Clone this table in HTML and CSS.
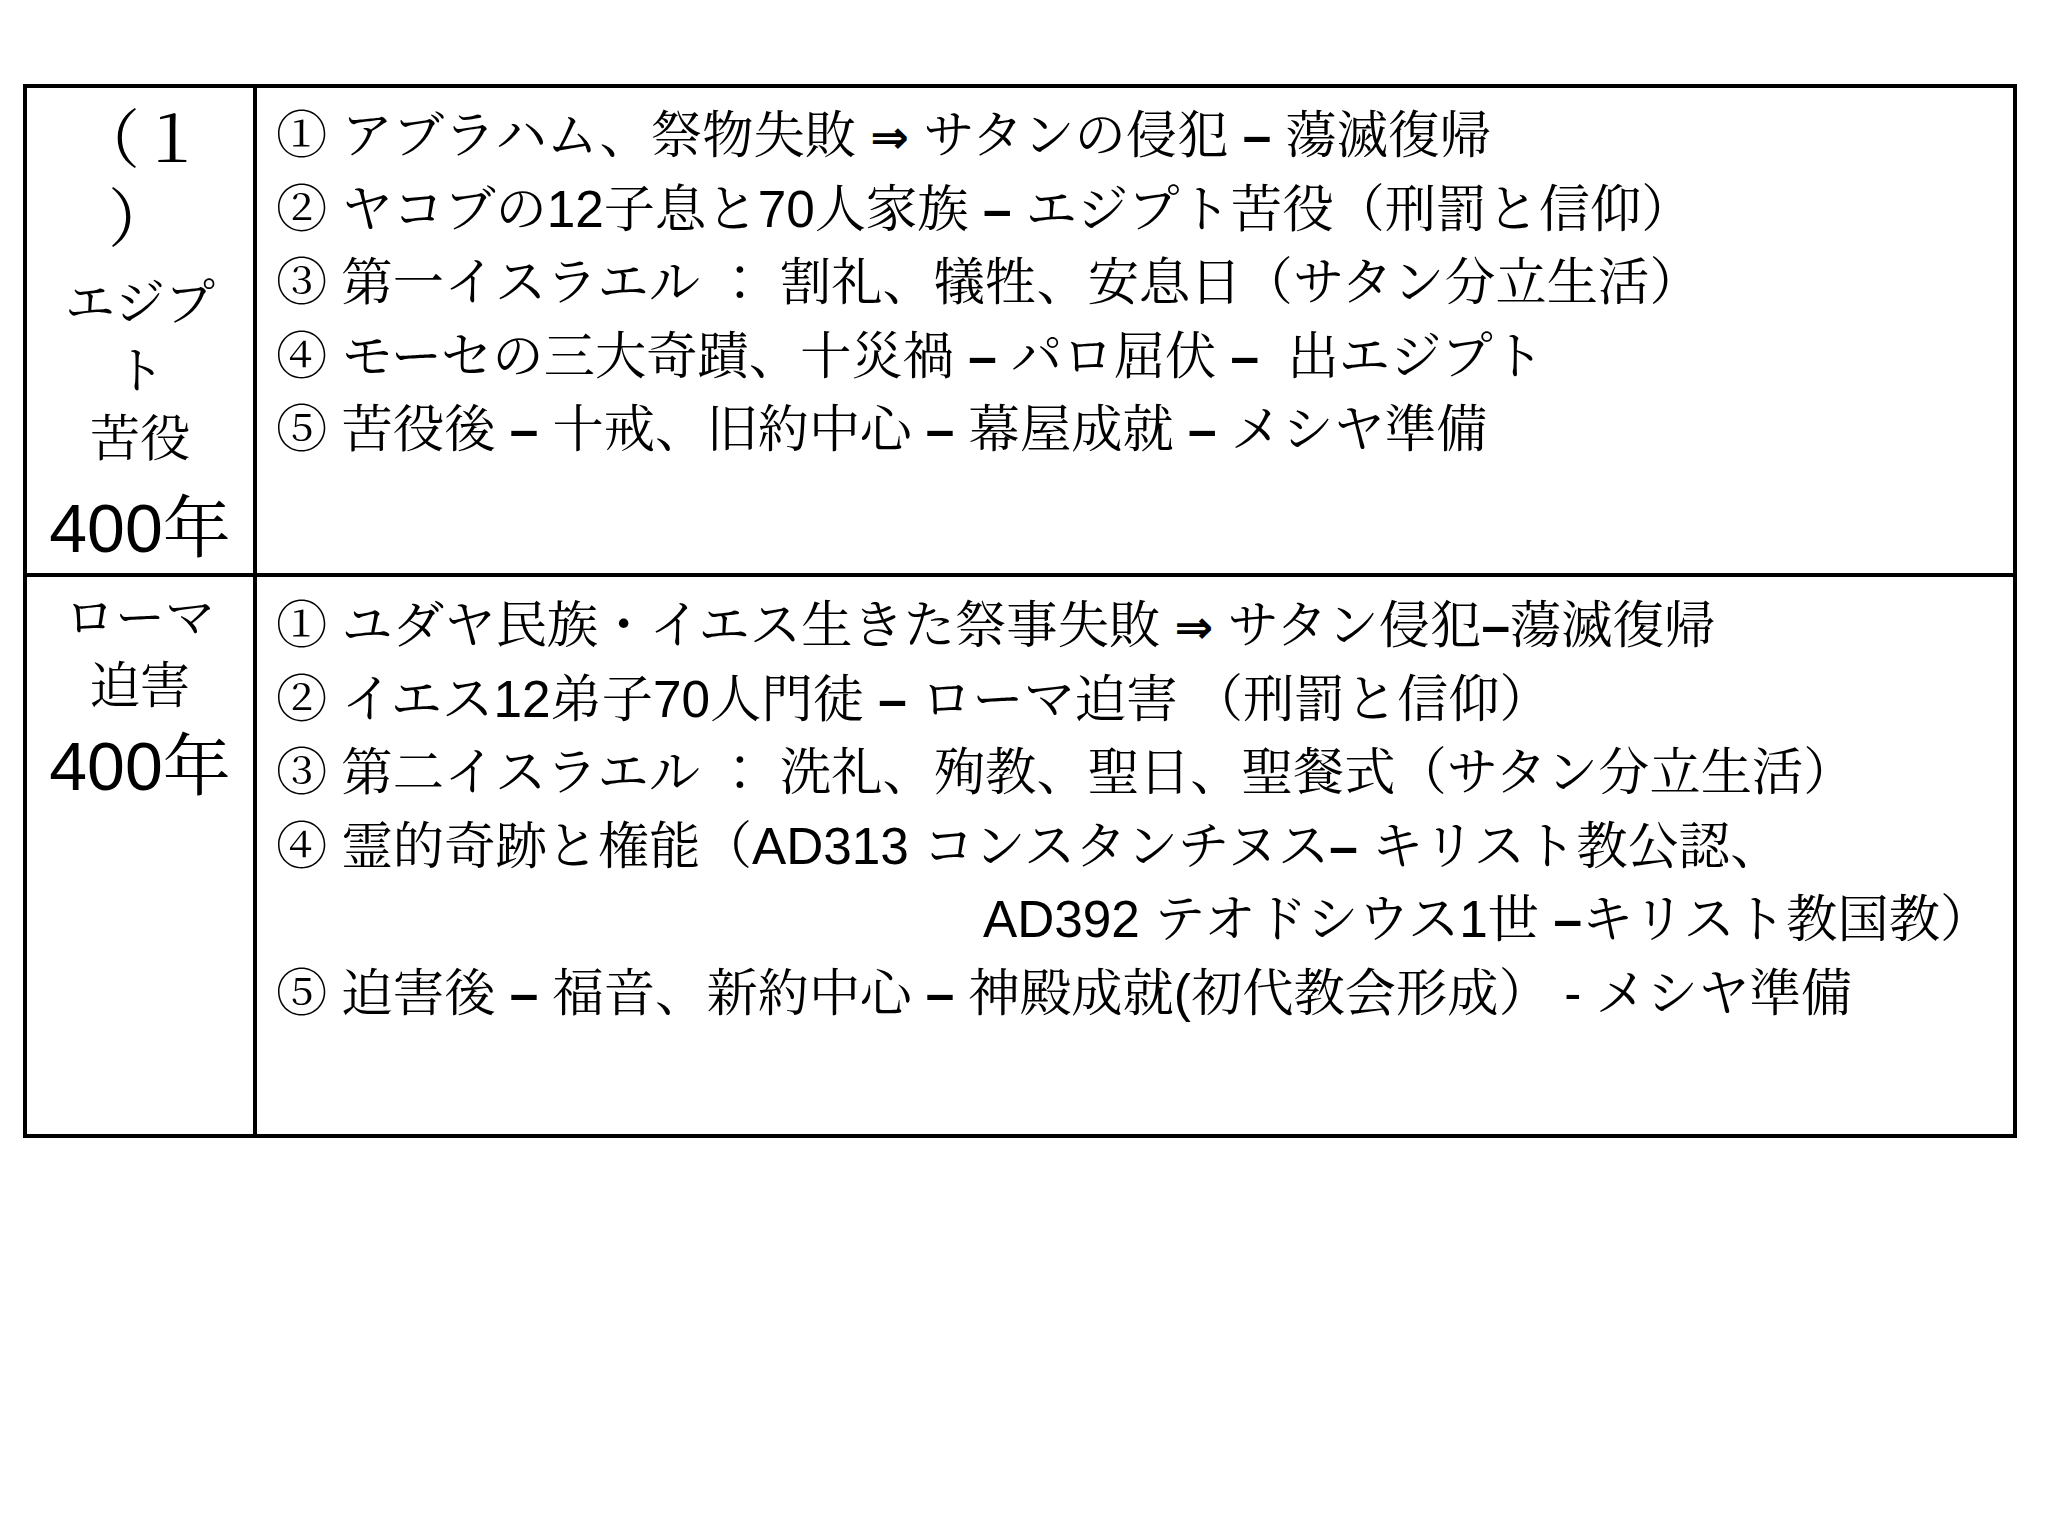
FILE: index.html
```html
<!DOCTYPE html>
<html lang="ja">
<head>
<meta charset="utf-8">
<title>エジプト苦役とローマ迫害</title>
<link rel="stylesheet" href="styles.css">
</head>
<body>
<div class="sheet">
  <div class="cell side r1">
    <div class="paren">（１<br>）</div>
    <div class="lbl lbl1">エジプ<br>ト<br>苦役</div>
    <div class="yrs yrs1">400年</div>
  </div>
  <div class="cell main r1">
    <div class="ln">① アブラハム、祭物失敗 <span class="arw">⇒</span> サタンの侵犯 <span class="d">–</span> 蕩滅復帰</div>
    <div class="ln">② ヤコブの12子息と70人家族 <span class="d">–</span> エジプト苦役（刑罰と信仰）</div>
    <div class="ln">③ 第一イスラエル ： 割礼、犠牲、安息日（サタン分立生活）</div>
    <div class="ln">④ モーセの三大奇蹟、十災禍 <span class="d">–</span> パロ屈伏 <span class="d">–</span>  出エジプト</div>
    <div class="ln">⑤ 苦役後 <span class="d">–</span> 十戒、旧約中心 <span class="d">–</span> 幕屋成就 <span class="d">–</span> メシヤ準備</div>
  </div>
  <div class="cell side r2">
    <div class="lbl lbl2">ローマ<br>迫害</div>
    <div class="yrs yrs2">400年</div>
  </div>
  <div class="cell main r2">
    <div class="ln">① ユダヤ民族・イエス生きた祭事失敗 <span class="arw">⇒</span> サタン侵犯<span class="d">–</span>蕩滅復帰</div>
    <div class="ln">② イエス12弟子70人門徒 <span class="d">–</span> ローマ迫害 （刑罰と信仰）</div>
    <div class="ln">③ 第二イスラエル ： 洗礼、殉教、聖日、聖餐式（サタン分立生活）</div>
    <div class="ln">④ 霊的奇跡と権能（AD313 コンスタンチヌス<span class="d">–</span> キリスト教公認、</div>
    <div class="ln cont">AD392 テオドシウス1世 <span class="d">–</span>キリスト教国教）</div>
    <div class="ln">⑤ 迫害後 <span class="d">–</span> 福音、新約中心 <span class="d">–</span> 神殿成就(初代教会形成） - メシヤ準備</div>
  </div>
</div>
</body>
</html>
```
FILE: styles.css
```css
html, body {
  margin: 0;
  padding: 0;
  background: #ffffff;
}

body {
  width: 2048px;
  height: 1536px;
  color: #000000;
  font-family: "Liberation Sans", "Noto Serif CJK JP", "Noto Sans CJK JP", sans-serif;
}

.sheet {
  box-sizing: border-box;
  margin: 84px 0 0 23px;
  width: 1994px;
  height: 1054px;
  border: 4px solid #000000;
  display: grid;
  grid-template-columns: 230px 1fr;
  grid-template-rows: 489px 1fr;
}

.cell {
  box-sizing: border-box;
}

.side {
  border-right: 4px solid #000000;
  text-align: center;
}

.r1 {
  border-bottom: 4px solid #000000;
}

.side.r1 {
  padding-top: 13px;
}

.side.r2 {
  padding-top: 7px;
}

.paren {
  font-size: 64px;
  line-height: 79px;
}

.lbl {
  font-size: 50px;
  line-height: 68px;
}

.lbl1 {
  margin-top: 10px;
}

.yrs {
  font-size: 68px;
  line-height: 88px;
}

.yrs1 {
  margin-top: 11px;
}

.yrs2 {
  margin-top: 2px;
}

.main {
  padding-left: 19px;
  font-size: 51.3px;
  line-height: 73.5px;
}

.main.r1 {
  padding-top: 11px;
}

.main.r2 {
  padding-top: 12px;
}

.ln {
  white-space: pre;
}

.cont {
  padding-left: 707px;
}

.d {
  font-weight: bold;
}

.arw {
  font-family: "DejaVu Sans", sans-serif;
  font-weight: bold;
  font-size: 0.9em;
  line-height: 1;
}
```
